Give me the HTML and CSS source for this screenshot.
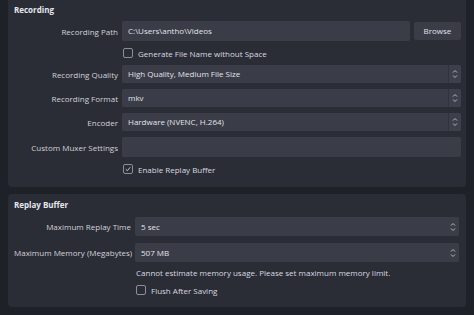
FILE: index.html
```html
<!DOCTYPE html>
<html>
<head>
<meta charset="utf-8">
<link rel="stylesheet" href="styles.css">
</head>
<body>
<div class="page">
  <section class="panel panel-rec">
    <div class="title">Recording</div>
    <div class="form">
      <div class="label">Recording Path</div>
      <div class="field path-field">
        <div class="input tall">C:\Users\antho\Videos</div>
        <div class="button">Browse</div>
      </div>

      <div class="label"></div>
      <div class="field check-row"><span class="check"></span><span>Generate File Name without Space</span></div>

      <div class="label">Recording Quality</div>
      <div class="field"><div class="combo"><span class="val">High Quality, Medium File Size</span><span class="spin"><svg viewBox="0 0 8 12" width="8" height="12"><path d="M2 4.5 L4 2.5 L6 4.5 M2 7.5 L4 9.5 L6 7.5" fill="none" stroke="#b4b6be" stroke-width="1"/></svg></span></div></div>

      <div class="label">Recording Format</div>
      <div class="field"><div class="combo"><span class="val">mkv</span><span class="spin"><svg viewBox="0 0 8 12" width="8" height="12"><path d="M2 4.5 L4 2.5 L6 4.5 M2 7.5 L4 9.5 L6 7.5" fill="none" stroke="#b4b6be" stroke-width="1"/></svg></span></div></div>

      <div class="label">Encoder</div>
      <div class="field"><div class="combo"><span class="val">Hardware (NVENC, H.264)</span><span class="spin"><svg viewBox="0 0 8 12" width="8" height="12"><path d="M2 4.5 L4 2.5 L6 4.5 M2 7.5 L4 9.5 L6 7.5" fill="none" stroke="#b4b6be" stroke-width="1"/></svg></span></div></div>

      <div class="label">Custom Muxer Settings</div>
      <div class="field"><div class="input tall muxer"></div></div>

      <div class="label"></div>
      <div class="field check-row"><span class="check checked"><svg viewBox="0 0 10 10" width="10" height="10"><path d="M2.2 5.2 L4.2 7.2 L7.8 2.8" fill="none" stroke="#d6d7dc" stroke-width="1.1"/></svg></span><span>Enable Replay Buffer</span></div>
    </div>
  </section>

  <section class="panel panel-replay">
    <div class="title">Replay Buffer</div>
    <div class="form form2">
      <div class="label">Maximum Replay Time</div>
      <div class="field"><div class="combo spinbox"><span class="val">5 sec</span><span class="spin flat"><svg viewBox="0 0 8 12" width="8" height="12"><path d="M2 4.5 L4 2.5 L6 4.5 M2 7.5 L4 9.5 L6 7.5" fill="none" stroke="#b4b6be" stroke-width="1"/></svg></span></div></div>

      <div class="label push">Maximum Memory (Megabytes)</div>
      <div class="field push"><div class="combo spinbox"><span class="val">507 MB</span><span class="spin flat"><svg viewBox="0 0 8 12" width="8" height="12"><path d="M2 4.5 L4 2.5 L6 4.5 M2 7.5 L4 9.5 L6 7.5" fill="none" stroke="#b4b6be" stroke-width="1"/></svg></span></div></div>

      <div class="label"></div>
      <div class="field note">Cannot estimate memory usage. Please set maximum memory limit.</div>

      <div class="label"></div>
      <div class="field check-row"><span class="check"></span><span>Flush After Saving</span></div>
    </div>
  </section>
</div>
</body>
</html>
```

FILE: styles.css
```css
* { box-sizing: border-box; }
html, body {
  margin: 0;
  padding: 0;
  background: #1f2129;
  width: 474px;
  height: 315px;
  overflow: hidden;
}
body {
  font-family: "Open Sans", "Noto Sans", sans-serif;
  font-size: 8px;
  color: #d9dae0;
}
.page {
  display: flex;
  flex-direction: column;
  gap: 7px;
  padding-left: 8px;
  padding-right: 8px;
}
.panel {
  background: #2a2c36;
  border-radius: 4px;
  padding: 4px 5px 0 6px;
}
.panel-rec {
  height: 187px;
  border-top-left-radius: 0;
  border-top-right-radius: 0;
}
.panel-replay {
  height: 113px;
  padding-top: 5px;
  padding-right: 7px;
}
.title {
  font-weight: 700;
  height: 12px;
  line-height: 12px;
  color: #e6e7ec;
}
.form {
  display: grid;
  grid-template-columns: 104px 1fr;
  column-gap: 4px;
  row-gap: 6px;
  margin-top: 5px;
  align-items: center;
}
.form2 {
  grid-template-columns: 117px 1fr;
  row-gap: 5px;
  margin-top: 6px;
}
.form2 .push { margin-top: 2px; }
.label {
  text-align: right;
  white-space: nowrap;
  color: #d2d3d9;
}
.field {
  display: flex;
  align-items: center;
  min-width: 0;
}
.path-field { gap: 4px; }
.input {
  flex: 1;
  height: 18px;
  line-height: 18px;
  background: #3a3d48;
  border-radius: 2px;
  padding-left: 6px;
  color: #e2e3e8;
}
.input.tall { height: 20px; line-height: 20px; }
.button {
  width: 47px;
  height: 18px;
  line-height: 18px;
  text-align: center;
  background: #3a3d48;
  border-radius: 2px;
  color: #e2e3e8;
}
.combo {
  flex: 1;
  display: flex;
  height: 18px;
  background: #3a3d48;
  border-radius: 2px;
  overflow: hidden;
}
.spinbox { height: 19px; }
.combo .val {
  flex: 1;
  padding-left: 6px;
  line-height: 18px;
  color: #e2e3e8;
}
.spinbox .val { line-height: 19px; }
.spin {
  width: 13px;
  display: flex;
  align-items: center;
  justify-content: center;
  background: #3d404c;
  border-left: 1px solid #30333d;
}
.spin.flat { border-left: none; background: #3a3d48; }
.check-row {
  height: 12px;
  gap: 5px;
  padding-left: 1px;
  color: #d9dae0;
}
.check {
  width: 10px;
  height: 10px;
  border: 1px solid #8d8f98;
  border-radius: 2px;
  display: flex;
  align-items: center;
  justify-content: center;
}
.check svg { display: block; }
.note {
  height: 12px;
  line-height: 12px;
  padding-left: 1px;
}
```
